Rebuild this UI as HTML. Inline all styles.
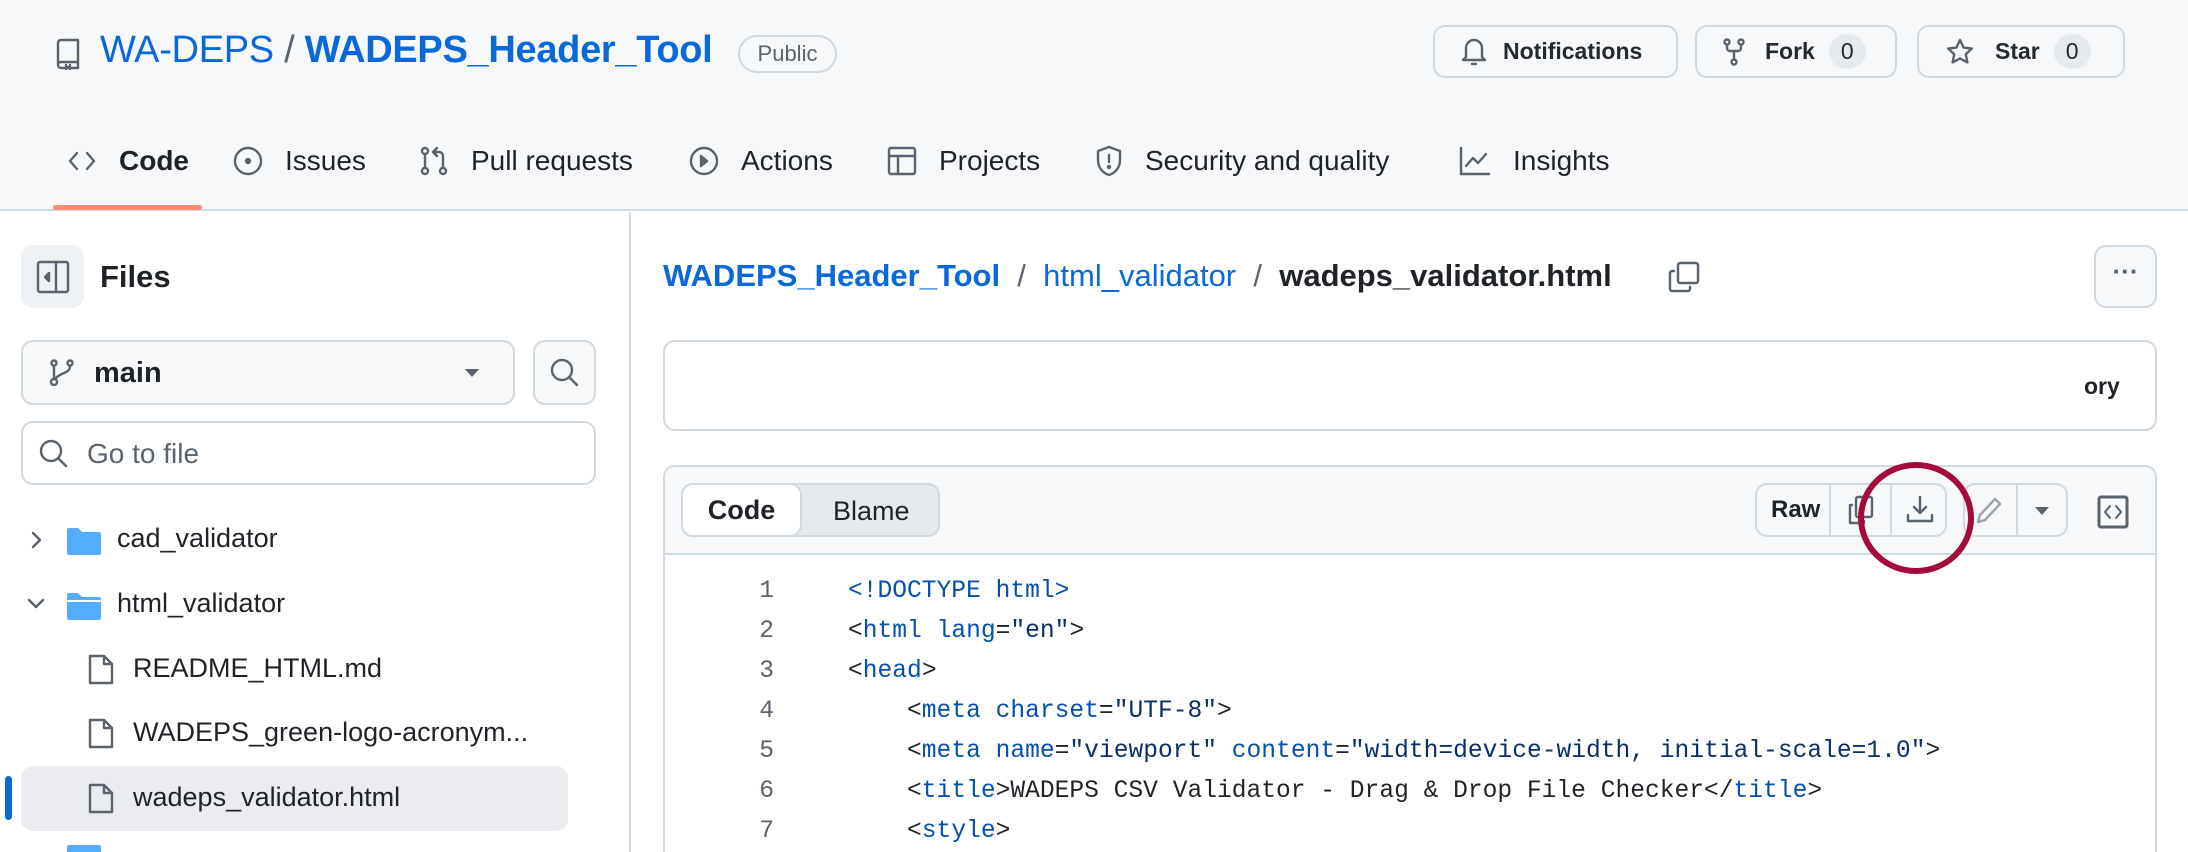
<!DOCTYPE html>
<html><head><meta charset="utf-8"><style>
*{box-sizing:border-box;margin:0;padding:0}
html{width:2188px;height:852px;overflow:hidden}
body{width:2188px;height:852px;overflow:hidden;background:#fff;font-family:"Liberation Sans",sans-serif;color:#1f2328;position:relative}
.a{position:absolute}
.hdr{left:0;top:0;width:2188px;height:211px;background:#f6f8fa;border-bottom:2px solid #d1d9e0}
.btn{position:absolute;border:2px solid #d1d9e0;border-radius:12px;background:#f6f8fa;display:flex;align-items:center;font-size:23px;font-weight:bold;color:#25292e}
.cnt{background:#e6eaef;border-radius:20px;padding:4px 12px;margin-left:14px;font-weight:normal}
.tab{position:absolute;top:145px;font-size:28px;display:flex;align-items:center;color:#1f2328}
.tab svg{margin-right:22px}
svg{fill:none;stroke:#59636e;stroke-width:2.4;stroke-linecap:round;stroke-linejoin:round}
.tree{position:absolute;font-size:27px;color:#1f2328;display:flex;align-items:center}
.code{font-family:"Liberation Mono",monospace;font-size:24.6px;white-space:pre;position:absolute;left:848px;color:#1f2328}
.ln{font-family:"Liberation Mono",monospace;font-size:24.6px;position:absolute;left:700px;width:74px;text-align:right;color:#59636e}
.t{color:#0550ae}.s{color:#0a3069}
</style></head><body>
<div class="a hdr"></div>
<svg class="a" style="left:54px;top:38px" width="28" height="32" viewBox="0 0 28 32"><path d="M4 27V5a3 3 0 0 1 3-3h17v22H7a3 3 0 0 0-3 3a3 3 0 0 0 3 3h3M24 24v6h-6M12 27v4l2-2 2 2v-4"/></svg>
<div class="a" style="left:100px;top:29px;font-size:38px;color:#0969da;white-space:nowrap;letter-spacing:-0.3px">WA-DEPS<span style="color:#59636e"> / </span><b>WADEPS_Header_Tool</b></div>
<div class="a" style="left:738px;top:35px;width:99px;height:38px;border:2px solid #d1d9e0;border-radius:20px;font-size:22px;color:#59636e;text-align:center;line-height:34px">Public</div>
<div class="btn" style="left:1433px;top:25px;width:245px;height:53px;padding-left:26px"><svg width="26" height="30" viewBox="0 0 26 30"><path d="M5 20V11a8 8 0 0 1 16 0v9l3 3H2l3-3M11 27h4"/></svg><span style="margin-left:16px">Notifications</span></div>
<div class="btn" style="left:1695px;top:25px;width:202px;height:53px;padding-left:26px"><svg width="22" height="30" viewBox="0 0 22 30"><circle cx="4" cy="5" r="2.5"/><circle cx="18" cy="5" r="2.5"/><circle cx="11" cy="25" r="2.5"/><path d="M4 8v3a3 3 0 0 0 3 3h8a3 3 0 0 0 3-3V8M11 14v8"/></svg><span style="margin-left:20px">Fork</span><span class="cnt">0</span></div>
<div class="btn" style="left:1917px;top:25px;width:208px;height:53px;padding-left:26px"><svg width="30" height="30" viewBox="0 0 30 30"><path d="M15 3l3.6 7.6 8.2 1-6 5.7 1.6 8.1L15 21.4l-7.4 4 1.6-8.1-6-5.7 8.2-1z"/></svg><span style="margin-left:20px">Star</span><span class="cnt">0</span></div>

<div class="tab" style="left:67px"><svg width="30" height="28" viewBox="0 0 30 28"><path d="M10 6L3 14l7 8M20 6l7 8-7 8"/></svg><b>Code</b></div>
<div class="a" style="left:53px;top:205px;width:149px;height:5px;background:#fd8c73;border-radius:3px"></div>
<div class="tab" style="left:233px"><svg width="30" height="30" viewBox="0 0 30 30"><circle cx="15" cy="15" r="13"/><circle cx="15" cy="15" r="2" fill="#59636e"/></svg>Issues</div>
<div class="tab" style="left:419px"><svg width="30" height="32" viewBox="0 0 30 32"><circle cx="6" cy="6" r="3"/><circle cx="6" cy="26" r="3"/><circle cx="24" cy="26" r="3"/><path d="M6 9v14M24 23V11a4 4 0 0 0-4-4h-5M18 3l-4 4 4 4"/></svg>Pull requests</div>
<div class="tab" style="left:689px"><svg width="30" height="30" viewBox="0 0 30 30"><circle cx="15" cy="15" r="13"/><path d="M12 10l6 5-6 5z" fill="#59636e"/></svg>Actions</div>
<div class="tab" style="left:887px"><svg width="30" height="30" viewBox="0 0 30 30"><rect x="2" y="2" width="26" height="26" rx="2"/><path d="M2 10h26M11 10v18"/></svg>Projects</div>
<div class="tab" style="left:1095px"><svg width="28" height="32" viewBox="0 0 28 32"><path d="M14 2l11 4v9c0 8-5 13-11 15C8 28 3 23 3 15V6z"/><path d="M14 10v7"/><circle cx="14" cy="22" r="1" fill="#59636e"/></svg>Security and quality</div>
<div class="tab" style="left:1459px"><svg width="32" height="30" viewBox="0 0 32 30"><path d="M2 2v26h28M7 20l7-8 5 5 8-9"/></svg>Insights</div>

<div class="a" style="left:629px;top:212px;width:2px;height:640px;background:#d1d9e0"></div>
<div class="a" style="left:21px;top:245px;width:63px;height:63px;background:#eff2f5;border-radius:12px"></div>
<svg class="a" style="left:36px;top:260px" width="34" height="34" viewBox="0 0 34 34"><rect x="2" y="2" width="30" height="30" rx="2"/><path d="M20 2v30M13 13l-4 4 4 4z" fill="#59636e"/></svg>
<div class="a" style="left:100px;top:259px;font-size:31px;font-weight:bold">Files</div>
<div class="a" style="left:21px;top:340px;width:494px;height:65px;border:2px solid #d1d9e0;border-radius:12px;background:#f6f8fa"></div>
<svg class="a" style="left:48px;top:358px" width="28" height="30" viewBox="0 0 28 30"><circle cx="6" cy="24" r="3"/><circle cx="6" cy="5" r="2.5"/><circle cx="22" cy="5" r="2.5"/><path d="M6 8v13M22 8c0 8-10 6-15 13"/></svg>
<div class="a" style="left:94px;top:357px;font-size:29px;font-weight:bold">main</div>
<svg class="a" style="left:464px;top:368px" width="16" height="10" viewBox="0 0 16 10"><path d="M1 1h14L8 9z" fill="#59636e" stroke="none"/></svg>
<div class="a" style="left:533px;top:340px;width:63px;height:65px;border:2px solid #d1d9e0;border-radius:12px;background:#f6f8fa"></div>
<svg class="a" style="left:550px;top:358px" width="30" height="30" viewBox="0 0 30 30"><circle cx="12" cy="12" r="10"/><path d="M19 19l8 8"/></svg>
<div class="a" style="left:21px;top:421px;width:575px;height:64px;border:2px solid #d1d9e0;border-radius:12px"></div>
<svg class="a" style="left:39px;top:439px" width="30" height="30" viewBox="0 0 30 30"><circle cx="12" cy="12" r="10"/><path d="M19 19l8 8"/></svg>
<div class="a" style="left:87px;top:438px;font-size:28px;color:#59636e">Go to file</div>

<svg class="a" style="left:30px;top:530px" width="14" height="20" viewBox="0 0 14 20"><path d="M3 3l7 7-7 7"/></svg>
<svg class="a" style="left:67px;top:527px" width="34" height="28" viewBox="0 0 34 28"><path d="M0 3a2 2 0 0 1 2-2h9l4 4h17a2 2 0 0 1 2 2v19a2 2 0 0 1-2 2H2a2 2 0 0 1-2-2z" fill="#54aeff" stroke="none"/></svg>
<div class="tree" style="left:117px;top:523px">cad_validator</div>
<svg class="a" style="left:26px;top:597px" width="20" height="14" viewBox="0 0 20 14"><path d="M3 3l7 7 7-7"/></svg>
<svg class="a" style="left:67px;top:592px" width="34" height="28" viewBox="0 0 34 28"><path d="M0 3a2 2 0 0 1 2-2h9l4 4h17a2 2 0 0 1 2 2v19a2 2 0 0 1-2 2H2a2 2 0 0 1-2-2z" fill="#54aeff" stroke="none"/><path d="M0 9h34" stroke="#fff" stroke-width="2"/></svg>
<div class="tree" style="left:117px;top:588px">html_validator</div>
<svg class="a" style="left:88px;top:654px" width="26" height="32" viewBox="0 0 26 32"><path d="M2 2h14l8 8v19H2zM16 2v8h8"/></svg>
<div class="tree" style="left:133px;top:653px">README_HTML.md</div>
<svg class="a" style="left:88px;top:718px" width="26" height="32" viewBox="0 0 26 32"><path d="M2 2h14l8 8v19H2zM16 2v8h8"/></svg>
<div class="tree" style="left:133px;top:717px">WADEPS_green-logo-acronym...</div>
<div class="a" style="left:21px;top:766px;width:547px;height:65px;background:#eaecef;border-radius:12px"></div>
<div class="a" style="left:5px;top:776px;width:7px;height:44px;background:#0969da;border-radius:4px"></div>
<svg class="a" style="left:88px;top:783px" width="26" height="32" viewBox="0 0 26 32"><path d="M2 2h14l8 8v19H2zM16 2v8h8"/></svg>
<div class="tree" style="left:133px;top:782px">wadeps_validator.html</div>
<div class="a" style="left:67px;top:845px;width:34px;height:7px;background:#54aeff;border-radius:2px 2px 0 0"></div>

<div class="a" style="left:663px;top:258px;font-size:31px;white-space:nowrap;color:#59636e"><b style="color:#0969da">WADEPS_Header_Tool</b>&nbsp;&nbsp;/&nbsp;&nbsp;<span style="color:#0969da">html_validator</span>&nbsp;&nbsp;/&nbsp;&nbsp;<b style="color:#1f2328">wadeps_validator.html</b></div>
<svg class="a" style="left:1668px;top:261px" width="32" height="32" viewBox="0 0 32 32"><rect x="10" y="2" width="20" height="20" rx="2"/><path d="M6 10H4a2 2 0 0 0-2 2v16a2 2 0 0 0 2 2h16a2 2 0 0 0 2-2v-2"/></svg>
<div class="a" style="left:2094px;top:245px;width:63px;height:63px;border:2px solid #d1d9e0;border-radius:12px;background:#f6f8fa;text-align:center;font-size:26px;line-height:48px;color:#59636e;font-weight:bold">···</div>
<div class="a" style="left:663px;top:340px;width:1494px;height:91px;border:2px solid #d1d9e0;border-radius:12px"></div>
<div class="a" style="left:2084px;top:373px;font-size:23px;font-weight:bold">ory</div>

<div class="a" style="left:663px;top:465px;width:1494px;height:387px;border:2px solid #d1d9e0;border-bottom:none;border-radius:12px 12px 0 0;overflow:hidden">
<div style="height:88px;background:#f6f8fa;border-bottom:2px solid #d1d9e0"></div></div>
<div class="a" style="left:681px;top:483px;width:259px;height:54px;background:#e6eaef;border:2px solid #d1d9e0;border-radius:12px"></div>
<div class="a" style="left:681px;top:483px;width:121px;height:54px;background:#fff;border:2px solid #d1d9e0;border-radius:12px;font-size:27px;font-weight:bold;text-align:center;line-height:50px">Code</div>
<div class="a" style="left:833px;top:496px;font-size:27px">Blame</div>
<div class="a" style="left:1755px;top:483px;width:192px;height:54px;border:2px solid #d1d9e0;border-radius:12px;background:#f6f8fa"></div>
<div class="a" style="left:1829px;top:483px;width:2px;height:54px;background:#d1d9e0"></div>
<div class="a" style="left:1890px;top:483px;width:2px;height:54px;background:#d1d9e0"></div>
<div class="a" style="left:1771px;top:496px;font-size:24px;font-weight:bold">Raw</div>
<svg class="a" style="left:1846px;top:495px" width="30" height="32" viewBox="0 0 30 32"><rect x="10" y="2" width="16" height="20" rx="2"/><path d="M6 10H4v18h14v-2"/></svg>
<svg class="a" style="left:1905px;top:495px" width="30" height="30" viewBox="0 0 30 30"><path d="M15 2v16M9 12l6 6 6-6M3 20v6h24v-6"/></svg>
<div class="a" style="left:1963px;top:483px;width:105px;height:54px;border:2px solid #d1d9e0;border-radius:12px;background:#f6f8fa"></div>
<div class="a" style="left:2016px;top:483px;width:2px;height:54px;background:#d1d9e0"></div>
<svg class="a" style="left:1975px;top:496px" width="28" height="30" viewBox="0 0 28 30"><path d="M20 3l5 5L10 24l-7 2 2-7z" stroke="#9aa3ad"/></svg>
<svg class="a" style="left:2034px;top:506px" width="16" height="10" viewBox="0 0 16 10"><path d="M1 1h14L8 9z" fill="#59636e" stroke="none"/></svg>
<svg class="a" style="left:2096px;top:495px" width="34" height="34" viewBox="0 0 34 34"><rect x="3" y="2" width="28" height="30" rx="2" stroke-width="3"/><path d="M14 11l-5 6 5 6M20 11l5 6-5 6" stroke-width="2"/></svg>
<svg class="a" style="left:1855px;top:460px" width="122" height="116" viewBox="0 0 122 116"><ellipse cx="61" cy="58" rx="55" ry="53" stroke="#a50b3a" stroke-width="6"/></svg>

<div class="ln" style="top:578px">1</div><div class="code" style="top:578px"><span class="t">&lt;!DOCTYPE html&gt;</span></div>
<div class="ln" style="top:618px">2</div><div class="code" style="top:618px">&lt;<span class="t">html</span> <span class="t">lang</span>=<span class="s">"en"</span>&gt;</div>
<div class="ln" style="top:658px">3</div><div class="code" style="top:658px">&lt;<span class="t">head</span>&gt;</div>
<div class="ln" style="top:698px">4</div><div class="code" style="top:698px">    &lt;<span class="t">meta</span> <span class="t">charset</span>=<span class="s">"UTF-8"</span>&gt;</div>
<div class="ln" style="top:738px">5</div><div class="code" style="top:738px">    &lt;<span class="t">meta</span> <span class="t">name</span>=<span class="s">"viewport"</span> <span class="t">content</span>=<span class="s">"width=device-width, initial-scale=1.0"</span>&gt;</div>
<div class="ln" style="top:778px">6</div><div class="code" style="top:778px">    &lt;<span class="t">title</span>&gt;WADEPS CSV Validator - Drag &amp; Drop File Checker&lt;/<span class="t">title</span>&gt;</div>
<div class="ln" style="top:818px">7</div><div class="code" style="top:818px">    &lt;<span class="t">style</span>&gt;</div>
</body></html>
